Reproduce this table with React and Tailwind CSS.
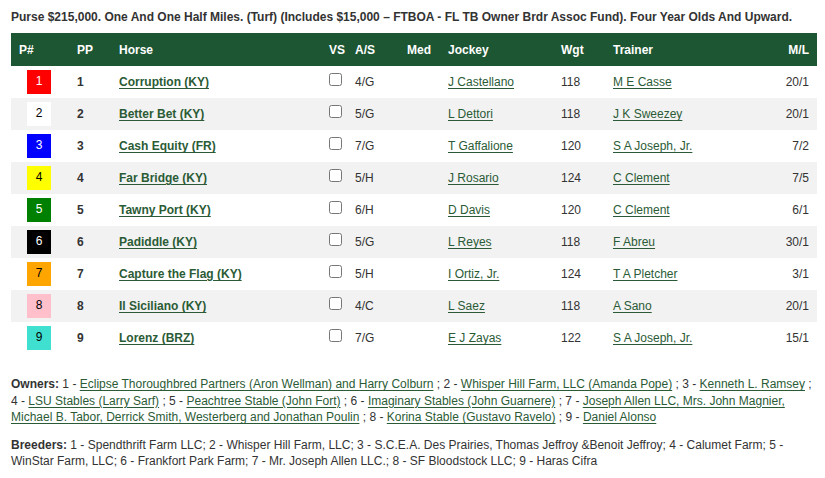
import React from 'react'

const horses = [
  { pn: '1', bg: 'bg-[#ff0000]', fg: 'text-white', pp: '1', horse: 'Corruption (KY)', as: '4/G', jockey: 'J Castellano', wgt: '118', trainer: 'M E Casse', ml: '20/1' },
  { pn: '2', bg: 'bg-white', fg: 'text-black', pp: '2', horse: 'Better Bet (KY)', as: '5/G', jockey: 'L Dettori', wgt: '118', trainer: 'J K Sweezey', ml: '20/1' },
  { pn: '3', bg: 'bg-[#0000ff]', fg: 'text-white', pp: '3', horse: 'Cash Equity (FR)', as: '7/G', jockey: 'T Gaffalione', wgt: '120', trainer: 'S A Joseph, Jr.', ml: '7/2' },
  { pn: '4', bg: 'bg-[#ffff00]', fg: 'text-black', pp: '4', horse: 'Far Bridge (KY)', as: '5/H', jockey: 'J Rosario', wgt: '124', trainer: 'C Clement', ml: '7/5' },
  { pn: '5', bg: 'bg-[#008000]', fg: 'text-white', pp: '5', horse: 'Tawny Port (KY)', as: '6/H', jockey: 'D Davis', wgt: '120', trainer: 'C Clement', ml: '6/1' },
  { pn: '6', bg: 'bg-black', fg: 'text-white', pp: '6', horse: 'Padiddle (KY)', as: '5/G', jockey: 'L Reyes', wgt: '118', trainer: 'F Abreu', ml: '30/1' },
  { pn: '7', bg: 'bg-[#ffa500]', fg: 'text-black', pp: '7', horse: 'Capture the Flag (KY)', as: '5/H', jockey: 'I Ortiz, Jr.', wgt: '124', trainer: 'T A Pletcher', ml: '3/1' },
  { pn: '8', bg: 'bg-[#ffc0cb]', fg: 'text-black', pp: '8', horse: 'Il Siciliano (KY)', as: '4/C', jockey: 'L Saez', wgt: '118', trainer: 'A Sano', ml: '20/1' },
  { pn: '9', bg: 'bg-[#40e0d0]', fg: 'text-black', pp: '9', horse: 'Lorenz (BRZ)', as: '7/G', jockey: 'E J Zayas', wgt: '122', trainer: 'S A Joseph, Jr.', ml: '15/1' },
]

const owners = [
  ['1', 'Eclipse Thoroughbred Partners (Aron Wellman) and Harry Colburn'],
  ['2', 'Whisper Hill Farm, LLC (Amanda Pope)'],
  ['3', 'Kenneth L. Ramsey'],
  ['4', 'LSU Stables (Larry Sarf)'],
  ['5', 'Peachtree Stable (John Fort)'],
  ['6', 'Imaginary Stables (John Guarnere)'],
  ['7', 'Joseph Allen LLC, Mrs. John Magnier, Michael B. Tabor, Derrick Smith, Westerberg and Jonathan Poulin'],
  ['8', 'Korina Stable (Gustavo Ravelo)'],
  ['9', 'Daniel Alonso'],
]

const link = 'text-[#2b5b36] underline underline-offset-2'

function App() {
  return (
    <div className="px-[11px] pt-[10px] text-[12px] text-[#333] font-['Liberation_Sans',Arial,sans-serif] bg-white min-h-[478px]">
      <p className="font-bold leading-[14px] mb-[9px]">
        Purse $215,000. One And One Half Miles. (Turf) (Includes $15,000 – FTBOA - FL TB Owner Brdr Assoc Fund). Four Year Olds And Upward.
      </p>

      <table className="table-fixed w-[806px] border-collapse">
        <colgroup>
          <col className="w-[58px]" />
          <col className="w-[42px]" />
          <col className="w-[210px]" />
          <col className="w-[26px]" />
          <col className="w-[52px]" />
          <col className="w-[41px]" />
          <col className="w-[113px]" />
          <col className="w-[52px]" />
          <col className="w-[112px]" />
          <col className="w-[100px]" />
        </colgroup>
        <thead>
          <tr className="bg-[#1d5632] text-white h-[33px] text-left">
            <th className="pl-2 font-bold">P#</th>
            <th className="pl-2 font-bold">PP</th>
            <th className="pl-2 font-bold">Horse</th>
            <th className="pl-2 font-bold">VS</th>
            <th className="pl-2 font-bold">A/S</th>
            <th className="pl-2 font-bold">Med</th>
            <th className="pl-2 font-bold">Jockey</th>
            <th className="pl-2 font-bold">Wgt</th>
            <th className="pl-2 font-bold">Trainer</th>
            <th className="pr-2 font-bold text-right">M/L</th>
          </tr>
        </thead>
        <tbody>
          {horses.map((h, i) => (
            <tr key={h.pn} className={`h-[32px] ${i % 2 === 1 ? 'bg-[#f2f2f2]' : 'bg-white'}`}>
              <td className="pl-[16px]">
                <div className={`w-[24px] h-[24px] flex items-center justify-center pb-[3px] ${h.bg} ${h.fg}`}>{h.pn}</div>
              </td>
              <td className="pl-2 font-bold">{h.pp}</td>
              <td className="pl-2 font-bold">
                <span className={link}>{h.horse}</span>
              </td>
              <td className="pl-2">
                <input type="checkbox" className="w-[13px] h-[13px] m-0 align-middle mb-[6px]" readOnly />
              </td>
              <td className="pl-2">{h.as}</td>
              <td className="pl-2"></td>
              <td className="pl-2">
                <span className={link}>{h.jockey}</span>
              </td>
              <td className="pl-2">{h.wgt}</td>
              <td className="pl-2">
                <span className={link}>{h.trainer}</span>
              </td>
              <td className="pr-2 text-right">{h.ml}</td>
            </tr>
          ))}
        </tbody>
      </table>

      <p className="mt-[22px] leading-[16.5px] w-[806px]">
        <span className="font-bold">Owners:</span>{' '}
        {owners.map(([n, name], i) => (
          <React.Fragment key={n}>
            {n} - <span className={link}>{name}</span>
            {i < owners.length - 1 ? ' ; ' : ''}
          </React.Fragment>
        ))}
      </p>

      <p className="mt-[11px] leading-[16.5px] w-[806px]">
        <span className="font-bold">Breeders:</span> 1 - Spendthrift Farm LLC; 2 - Whisper Hill Farm, LLC; 3 - S.C.E.A. Des Prairies, Thomas Jeffroy &amp;Benoit Jeffroy; 4 - Calumet Farm; 5 - WinStar Farm, LLC; 6 - Frankfort Park Farm; 7 - Mr. Joseph Allen LLC.; 8 - SF Bloodstock LLC; 9 - Haras Cifra
      </p>
    </div>
  )
}

export default App
